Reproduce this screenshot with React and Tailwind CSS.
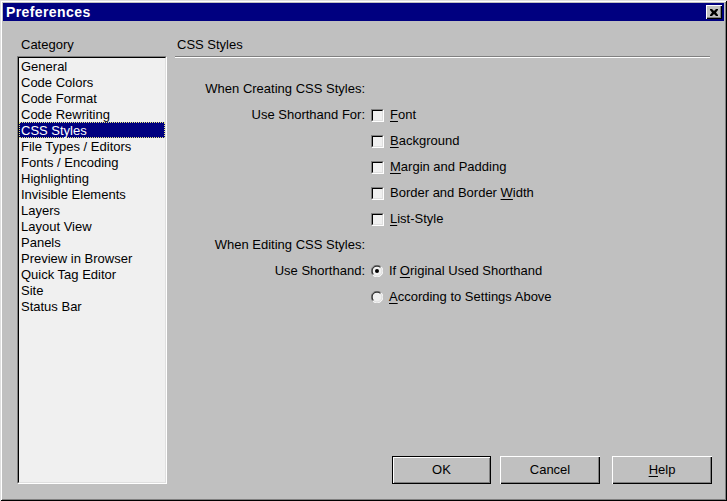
import React from "react";

const categories = [
  "General",
  "Code Colors",
  "Code Format",
  "Code Rewriting",
  "CSS Styles",
  "File Types / Editors",
  "Fonts / Encoding",
  "Highlighting",
  "Invisible Elements",
  "Layers",
  "Layout View",
  "Panels",
  "Preview in Browser",
  "Quick Tag Editor",
  "Site",
  "Status Bar",
];

function Checkbox() {
  return (
    <div className="w-[13px] h-[13px] border-t border-l border-t-[#808080] border-l-[#808080] border-b border-r border-b-white border-r-white shrink-0">
      <div className="w-full h-full border-t border-l border-t-black border-l-black border-b border-r border-b-[#dfdfdf] border-r-[#dfdfdf] bg-[#f0f0f0]" />
    </div>
  );
}

function Radio({ checked }) {
  return (
    <svg width="12" height="12" viewBox="0 0 12 12" className="shrink-0">
      <circle cx="6" cy="6" r="5.5" fill="#f0f0f0" />
      <path d="M10.2 1.8 A5.5 5.5 0 0 0 1.8 10.2" stroke="#808080" strokeWidth="1" fill="none" />
      <path d="M1.8 10.2 A5.5 5.5 0 0 0 10.2 1.8" stroke="#ffffff" strokeWidth="1" fill="none" />
      <path d="M9.5 2.5 A4.5 4.5 0 0 0 2.5 9.5" stroke="#000000" strokeWidth="1" fill="none" />
      <path d="M2.5 9.5 A4.5 4.5 0 0 0 9.5 2.5" stroke="#dfdfdf" strokeWidth="1" fill="none" />
      {checked && <circle cx="6" cy="6" r="2" fill="#000" />}
    </svg>
  );
}

function U({ children }) {
  return <span className="underline underline-offset-2">{children}</span>;
}

function Row({ label, control, children }) {
  return (
    <>
      <div className="h-[26px] flex items-center justify-end whitespace-nowrap">{label}</div>
      <div className="h-[26px] flex items-center gap-[6px] whitespace-nowrap">
        {control}
        {children}
      </div>
    </>
  );
}

function Button({ children, isDefault, className }) {
  return (
    <div
      className={
        "h-[28px] flex items-center justify-center " +
        (isDefault
          ? "border border-black shadow-[inset_1px_1px_#fff,inset_-1px_-1px_#808080] "
          : "shadow-[inset_1px_1px_#fff,inset_-1px_-1px_#000,inset_-2px_-2px_#808080] ") +
        className
      }
    >
      {children}
    </div>
  );
}

export default function App() {
  return (
    <div
      className="w-[727px] h-[501px] bg-[#c0c0c0] p-[3px] flex flex-col text-[13px] text-black shadow-[inset_1px_1px_#dfdfdf,inset_-1px_-1px_#000,inset_2px_2px_#fff,inset_-2px_-2px_#808080]"
      style={{ fontFamily: '"Liberation Sans", Arial, sans-serif' }}
    >
      {/* Title bar */}
      <div className="h-[18px] bg-[#000080] flex items-center justify-between pl-[3px] pr-[2px]">
        <span className="text-white font-bold text-[14px] leading-none tracking-[0.4px]">Preferences</span>
        <div className="w-[16px] h-[14px] bg-[#c0c0c0] flex items-center justify-center shadow-[inset_1px_1px_#fff,inset_-1px_-1px_#000,inset_-2px_-2px_#808080]">
          <svg width="8" height="7" viewBox="0 0 8 7">
            <path d="M0 0h2l2 2 2-2h2v1L6 3.5 8 6v1H6L4 5 2 7H0V6l2-2.5L0 1z" fill="#000" />
          </svg>
        </div>
      </div>

      {/* Body */}
      <div className="flex flex-row pt-[15px] pl-[14px] pr-[12px]">
        {/* Left column */}
        <div className="w-[150px] flex flex-col">
          <div className="h-[16px] leading-[16px] pl-[4px] mt-[1px]">Category</div>
          <div className="mt-[3px] h-[428px] border-t border-l border-t-[#808080] border-l-[#808080] border-b border-r border-b-white border-r-white">
            <div className="h-full border-t border-l border-t-black border-l-black border-b border-r border-b-[#dfdfdf] border-r-[#dfdfdf] bg-[#f0f0f0]">
              {categories.map((c) =>
                c === "CSS Styles" ? (
                  <div
                    key={c}
                    className="h-[16px] leading-[15px] pl-[1px] bg-[#000080] text-white border border-dotted border-[#e8e880] whitespace-nowrap"
                  >
                    {c}
                  </div>
                ) : (
                  <div key={c} className="h-[16px] leading-[17px] pl-[2px] whitespace-nowrap">
                    {c}
                  </div>
                )
              )}
            </div>
          </div>
        </div>

        {/* Right column */}
        <div className="ml-[7px] flex-1 flex flex-col">
          <div className="h-[16px] leading-[16px] pl-[3px] mt-[1px]">CSS Styles</div>
          <div className="mt-[3px] ml-[1px] mr-[2px] h-[2px] border-t border-t-[#808080] border-b border-b-white" />

          <div className="mt-[18px] grid grid-cols-[191px_auto] gap-x-[6px]">
            <Row label="When Creating CSS Styles:" />
            <Row label="Use Shorthand For:" control={<Checkbox />}>
              <span><U>F</U>ont</span>
            </Row>
            <Row control={<Checkbox />}>
              <span><U>B</U>ackground</span>
            </Row>
            <Row control={<Checkbox />}>
              <span><U>M</U>argin and Padding</span>
            </Row>
            <Row control={<Checkbox />}>
              <span>Border and Border <U>W</U>idth</span>
            </Row>
            <Row control={<Checkbox />}>
              <span><U>L</U>ist-Style</span>
            </Row>
            <Row label="When Editing CSS Styles:" />
            <Row label="Use Shorthand:" control={<Radio checked />}>
              <span>If <U>O</U>riginal Used Shorthand</span>
            </Row>
            <Row control={<Radio />}>
              <span><U>A</U>ccording to Settings Above</span>
            </Row>
          </div>

          <div className="mt-auto flex flex-row justify-end">
            <Button isDefault className="w-[99px]">OK</Button>
            <Button className="w-[100px] ml-[9px]">Cancel</Button>
            <Button className="w-[100px] ml-[12px]"><span><U>H</U>elp</span></Button>
          </div>
        </div>
      </div>
    </div>
  );
}
